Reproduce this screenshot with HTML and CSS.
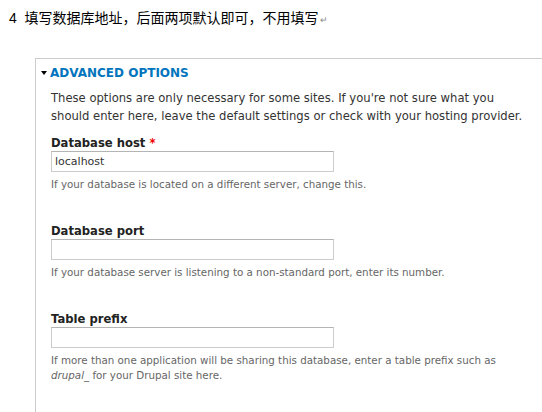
FILE: index.html
```html
<!DOCTYPE html>
<html lang="en">
<head>
    <meta charset="UTF-8">
    <title>Database configuration</title>
    <link rel="stylesheet" href="styles.css">
</head>
<body>
    <p class="step">4&nbsp; 填写数据库地址，后面两项默认即可，不用填写<span class="mark">↵</span></p>

    <fieldset class="advanced">
        <legend><span class="arrow"></span>Advanced options</legend>
        <p class="intro">These options are only necessary for some sites. If you're not sure what you should enter here, leave the default settings or check with your hosting provider.</p>

        <div class="field">
            <label for="host">Database host <span class="required">*</span></label>
            <input type="text" id="host" value="localhost">
            <div class="help">If your database is located on a different server, change this.</div>
        </div>

        <div class="field">
            <label for="port">Database port</label>
            <input type="text" id="port">
            <div class="help">If your database server is listening to a non-standard port, enter its number.</div>
        </div>

        <div class="field">
            <label for="prefix">Table prefix</label>
            <input type="text" id="prefix">
            <div class="help">If more than one application will be sharing this database, enter a table prefix such as <em>drupal_</em> for your Drupal site here.</div>
        </div>
    </fieldset>
</body>
</html>
```
FILE: styles.css
```css
body {
    margin: 0;
    background: #fff;
    font-family: "DejaVu Sans", sans-serif;
    color: #333;
    overflow: hidden;
}
.step {
    margin: 0;
    padding: 10px 0 0 9px;
    font-family: "Liberation Sans", "Noto Sans CJK SC", sans-serif;
    font-size: 14px;
    line-height: 16px;
    color: #000;
}
.mark {
    font-size: 9px;
    color: #888;
    margin-left: 1px;
}
.advanced {
    margin: 30px -20px 0 35px;
    padding: 0 15px 30px 15px;
    border: 1px solid #ccc;
    border-right: none;
    height: 360px;
}
.advanced legend {
    float: left;
    width: 100%;
    margin: 6px 0 0 -12px;
    font-size: 12px;
    font-weight: bold;
    text-transform: uppercase;
    color: #0074bd;
    line-height: 16px;
}
.arrow {
    display: inline-block;
    width: 0;
    height: 0;
    border-left: 3px solid transparent;
    border-right: 3px solid transparent;
    border-top: 4px solid #000;
    margin: 0 3px 2px 0;
    vertical-align: middle;
}
.intro {
    clear: both;
    max-width: 476px;
    margin: 0;
    padding-top: 8px;
    font-size: 11.6px;
    line-height: 18px;
    color: #333;
}
.field {
    margin-top: 11px;
    height: 77px;
}
.field label {
    display: block;
    font-size: 11.6px;
    font-weight: bold;
    color: #222;
    line-height: 14px;
    margin-bottom: 1px;
}
.required {
    color: #e00;
}
.field input {
    display: block;
    box-sizing: border-box;
    width: 283px;
    height: 21px;
    margin: 0;
    padding: 2px 3px;
    border: 1px solid #ccc;
    border-top-color: #b4b4b4;
    font-family: "DejaVu Sans", sans-serif;
    font-size: 11px;
    color: #333;
}
.help {
    max-width: 476px;
    margin-top: 5px;
    font-size: 10.3px;
    line-height: 15px;
    color: #666;
}
```
